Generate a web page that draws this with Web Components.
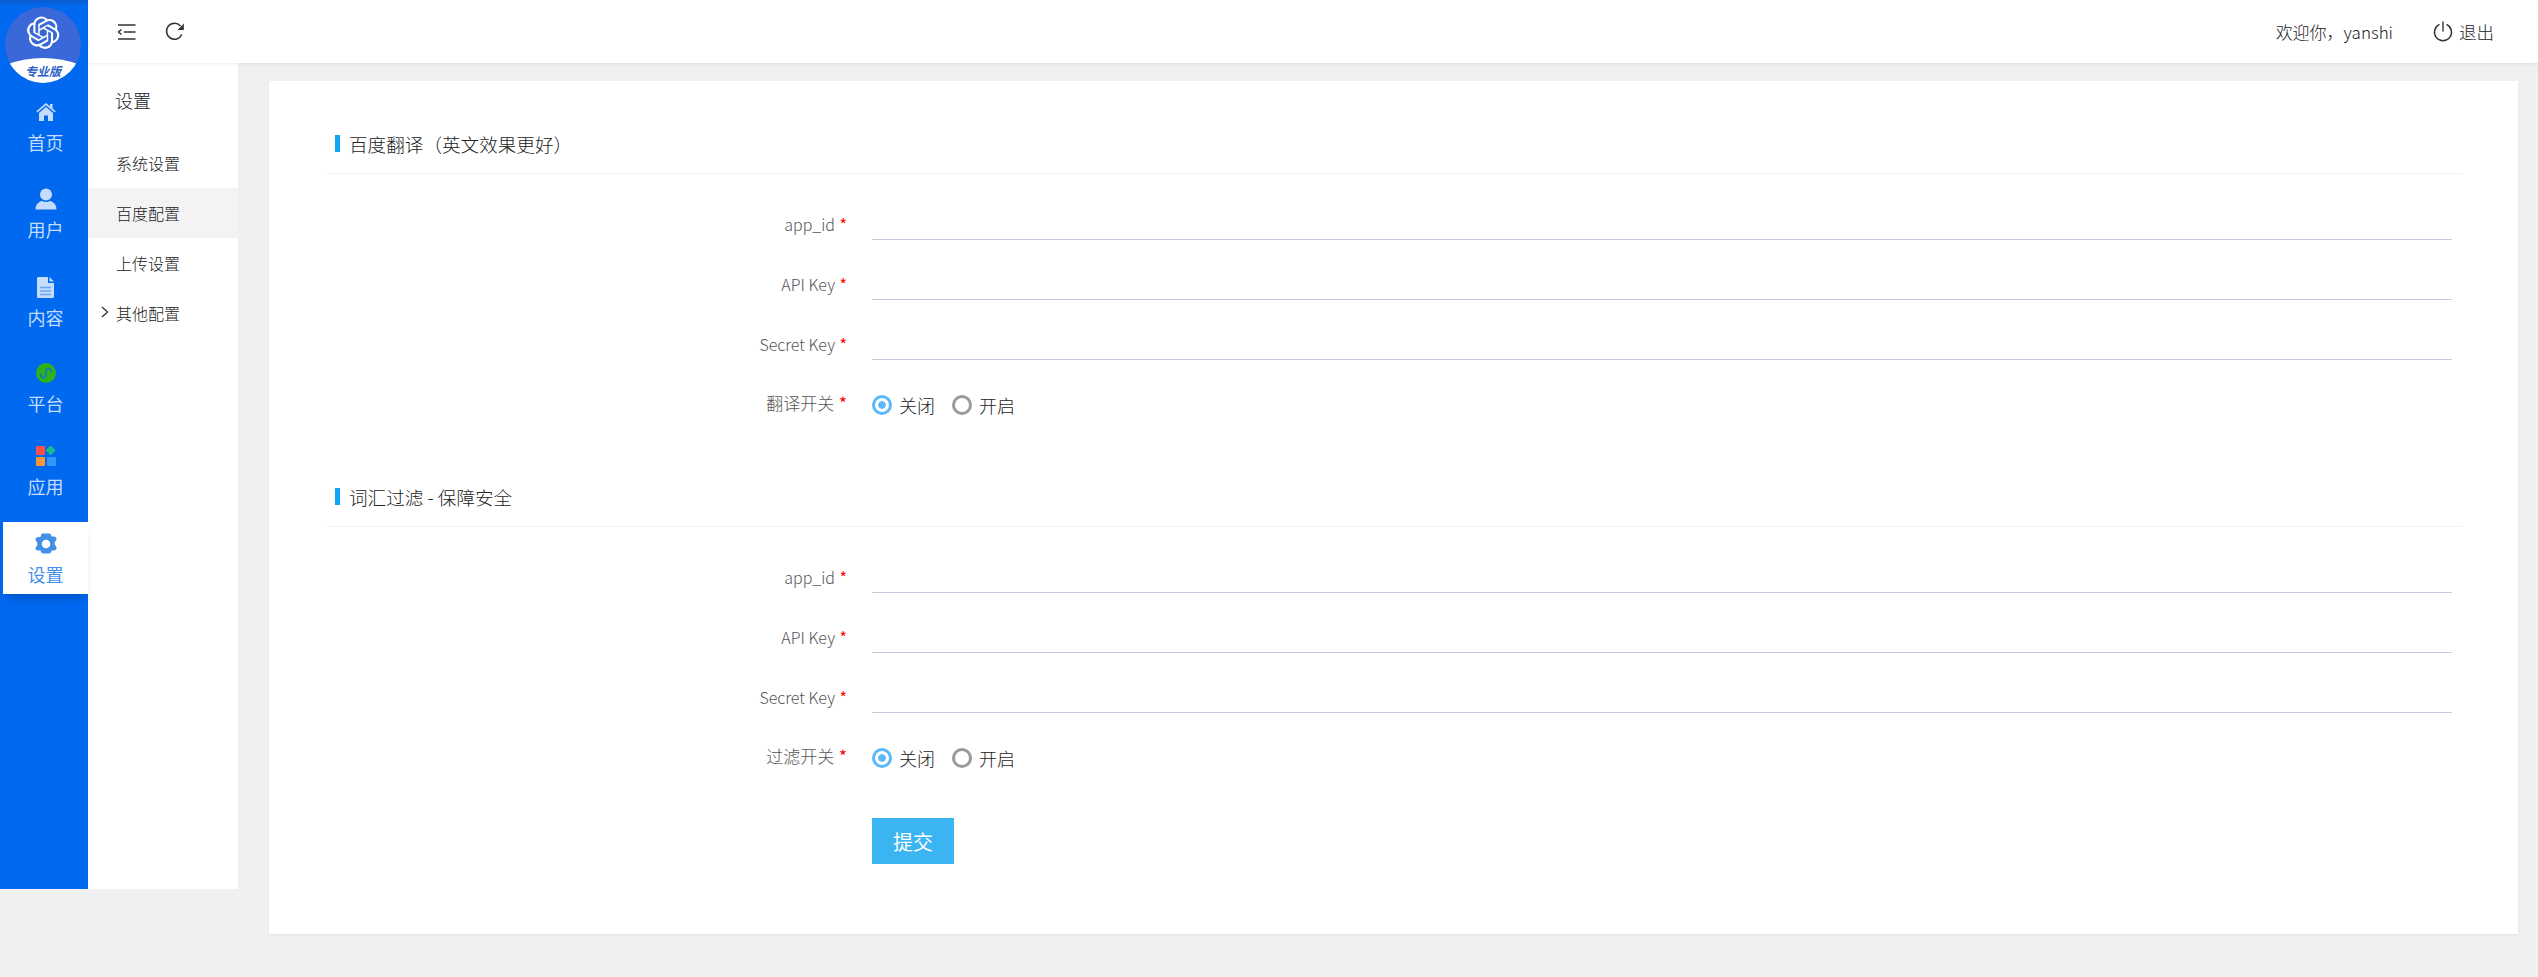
<!DOCTYPE html>
<html lang="zh-CN">
  <head>
    <meta charset="utf-8" />
    <title>百度配置</title>
    <style>
      html, body { margin: 0; height: 100%; }
      body { background: #f0f0f0; font-family: "Noto Sans CJK SC", sans-serif; font-weight: 300; color: #222; }
    </style>
  </head>
  <body>
    <app-shell>
      <side-nav slot="side">
        <nav-item label="首页" style="margin-bottom:15px">
          <svg width="20" height="18" viewBox="0 0 20 18"><path fill="#c5dcfc" d="M10 0 0.300 8.300l1 1.200L10 2.200l8.700 7.300 1-1.200-3.200-2.700V1h-2.600v2.500zM3 10V18h5v-5.500h4V18h5V10L10 4z"/></svg>
        </nav-item>
        <nav-item label="用户" style="margin-bottom:16px">
          <svg width="22" height="22" viewBox="0 0 22 22"><circle cx="11" cy="6.500" r="6" fill="#c5dcfc"/><path fill="#c5dcfc" d="M0.500 21.500c0-5 3-8 6.500-8.600 2.400 1.500 5.600 1.500 8 0 3.500.6 6.500 3.600 6.500 8.600z"/></svg>
        </nav-item>
        <nav-item label="内容" style="margin-bottom:14px">
          <svg width="17" height="21" viewBox="0 0 17 21"><path fill="#c5dcfc" d="M1.200 0H11V6H17V19.800a1.200 1.200 0 0 1-1.200 1.200H1.200A1.200 1.200 0 0 1 0 19.800V1.200A1.200 1.200 0 0 1 1.200 0zM12.500 0 17 4.500H12.500z"/><path stroke="#6ea4f2" stroke-width="1.300" d="M3 10.500h11M3 14h11M3 17.500h11"/></svg>
        </nav-item>
        <nav-item label="平台" style="margin-bottom:11px">
          <svg width="20" height="20" viewBox="0 0 20 20"><circle cx="10" cy="10" r="10" fill="#2eb11a"/><path fill="none" stroke="#0f78c4" stroke-width="1.700" stroke-linecap="round" d="M4.900 11.200A2.600 2.600 0 1 0 9.900 12.200V7.800A2.600 2.600 0 1 1 15.100 8.800"/></svg>
        </nav-item>
        <nav-item label="应用" style="margin-bottom:16px">
          <svg width="20" height="20" viewBox="0 0 20 20">
            <rect x="0" y="0" width="9" height="9" rx="1.200" fill="#ff5148"/>
            <rect x="11" y="0.800" width="7.200" height="7.200" rx="1" fill="#18bc8c" transform="rotate(45 14.600 4.400)"/>
            <rect x="0" y="11" width="9" height="9" rx="1.200" fill="#ff9538"/>
            <rect x="11" y="11" width="9" height="9" rx="1.200" fill="#3097fb"/>
          </svg>
        </nav-item>
        <nav-item label="设置" active>
          <svg width="24" height="22" viewBox="0 0 24 22"><path fill-rule="evenodd" fill="#4290e8" d="M9 .5h6c1 0 1.700.5 2 1.400l.6 1.500 1.700.1c2.400.2 3.200 1.200 3.200 2.300 0 .8-.3 1.500-.8 2.100l-1 1.300.1 2.600 1 1.300c.5.600.8 1.300.8 2.100 0 1.100-.8 2.100-3.200 2.300l-1.700.1-.6 1.500c-.3.900-1 1.400-2 1.400H9c-1 0-1.700-.5-2-1.400l-.6-1.500-1.700-.1C2.300 17.700 1.500 16.700 1.500 15.600c0-.8.300-1.500.8-2.100l1-1.300-.1-2.600-1-1.300C1.700 7.700 1.500 7 1.500 6.300c0-1.100.8-2.100 3.200-2.300l1.700-.1.600-1.500C7.300 1 8 .5 9 .5zM12 6.700a4.300 4.300 0 1 0 0 8.600 4.300 4.300 0 0 0 0-8.600z"/></svg>
        </nav-item>
      </side-nav>
      <top-bar slot="top" user="yanshi"></top-bar>
      <sub-nav slot="sub" title="设置">
        <sub-item>系统设置</sub-item>
        <sub-item active>百度配置</sub-item>
        <sub-item>上传设置</sub-item>
        <sub-item arrow>其他配置</sub-item>
      </sub-nav>
      <form-card slot="main">
        <form-section title="百度翻译（英文效果更好）" style="margin-bottom:36px">
          <form-field label="app_id"></form-field>
          <form-field label="API Key"></form-field>
          <form-field label="Secret Key"></form-field>
          <radio-field label="翻译开关"></radio-field>
        </form-section>
        <form-section title="词汇过滤 - 保障安全" style="margin-bottom:30px">
          <form-field label="app_id"></form-field>
          <form-field label="API Key"></form-field>
          <form-field label="Secret Key"></form-field>
          <radio-field label="过滤开关"></radio-field>
        </form-section>
        <submit-button>提交</submit-button>
      </form-card>
    </app-shell>

    <script>
      function shadow(el, html) {
        el.attachShadow({mode: 'open'}).innerHTML = html;
      }

      class AppShell extends HTMLElement {
        constructor() {
          super();
          shadow(this, `
            <style>
            :host { display: flex; align-items: flex-start; width: 100%; height: 977px; overflow: hidden; }
            .right { flex: 1; min-width: 0; display: flex; flex-direction: column; }
            .body { display: flex; align-items: flex-start; }
            .main { flex: 1; min-width: 0; padding: 18px 20px 0 31px; }
            </style>
            <slot name="side"></slot>
            <div class="right">
              <slot name="top"></slot>
              <div class="body">
                <slot name="sub"></slot>
                <div class="main"><slot name="main"></slot></div>
              </div>
            </div>
          `);
        }
      }

      class SideNav extends HTMLElement {
        constructor() {
          super();
          const logo = 'M22.2819 9.8211a5.9847 5.9847 0 0 0-.5157-4.9108 6.0462 6.0462 0 0 0-6.5098-2.9A6.0651 6.0651 0 0 0 4.9807 4.1818a5.9847 5.9847 0 0 0-3.9977 2.9 6.0462 6.0462 0 0 0 .7427 7.0966 5.98 5.98 0 0 0 .511 4.9107 6.051 6.051 0 0 0 6.5146 2.9001A5.9847 5.9847 0 0 0 13.2599 24a6.0557 6.0557 0 0 0 5.7718-4.2058 5.9894 5.9894 0 0 0 3.9977-2.9001 6.0557 6.0557 0 0 0-.7475-7.0729zm-9.022 12.6081a4.4755 4.4755 0 0 1-2.8764-1.0408l.1419-.0804 4.7783-2.7582a.7948.7948 0 0 0 .3927-.6813v-6.7369l2.02 1.1686a.071.071 0 0 1 .038.052v5.5826a4.504 4.504 0 0 1-4.4945 4.4944zm-9.6607-4.1254a4.4708 4.4708 0 0 1-.5346-3.0137l.142.0852 4.783 2.7582a.7712.7712 0 0 0 .7806 0l5.8428-3.3685v2.3324a.0804.0804 0 0 1-.0332.0615L9.74 19.9502a4.4992 4.4992 0 0 1-6.1408-1.6464zM2.3408 7.8956a4.485 4.485 0 0 1 2.3655-1.9728V11.6a.7664.7664 0 0 0 .3879.6765l5.8144 3.3543-2.0201 1.1685a.0757.0757 0 0 1-.071 0l-4.8303-2.7865A4.504 4.504 0 0 1 2.3408 7.872zm16.5963 3.8558L13.1038 8.364 15.1192 7.2a.0757.0757 0 0 1 .071 0l4.8303 2.7913a4.4944 4.4944 0 0 1-.6765 8.1042v-5.6772a.79.79 0 0 0-.407-.667zm2.0107-3.0231l-.142-.0852-4.7735-2.7818a.7759.7759 0 0 0-.7854 0L9.409 9.2297V6.8974a.0662.0662 0 0 1 .0284-.0615l4.8303-2.7866a4.4992 4.4992 0 0 1 6.6802 4.66zM8.3065 12.863l-2.02-1.1638a.0804.0804 0 0 1-.038-.0567V6.0742a4.4992 4.4992 0 0 1 7.3757-3.4537l-.142.0805L8.704 5.459a.7948.7948 0 0 0-.3927.6813zm1.0976-2.3654l2.602-1.4998 2.6069 1.4998v2.9994l-2.5974 1.4997-2.6067-1.4997Z';
          shadow(this, `
            <style>
            :host { display: block; position: relative; flex: none; width: 88px; height: 889px; background: #0069f0; box-sizing: border-box; padding-top: 90px; font-weight: 400; }
            :host::before { content: ""; position: absolute; left: 0; right: 0; top: 0; height: 6px; background: linear-gradient(#0a5ccb, #0069f0); }
            .logo { position: absolute; left: 5px; top: 7px; width: 76px; height: 76px; }
            .logo svg { display: block; }
            .logo span { position: absolute; left: 0; right: 0; top: 54px; text-align: center; font: italic 700 12px/20px "Noto Sans CJK SC", sans-serif; color: #2f5fc9; }
            </style>
            <div class="logo">
              <svg width="76" height="76" viewBox="0 0 76 76">
                <defs><clipPath id="c"><circle cx="38" cy="38" r="38"/></clipPath></defs>
                <circle cx="38" cy="38" r="38" fill="#3a68d8"/>
                <path clip-path="url(#c)" fill="#fff" d="M0 58Q38 44 76 58V76H0z"/>
                <g transform="translate(22 9.500) scale(1.350)"><path fill="#fff" d="${logo}"/></g>
              </svg>
              <span>专业版</span>
            </div>
            <slot></slot>
          `);
        }
      }

      class NavItem extends HTMLElement {
        constructor() {
          super();
          shadow(this, `
            <style>
            :host { display: block; color: #c5dcfc; padding-left: 3px; }
            :host([active]) { color: #4290e8; padding-left: 0; margin-left: 3px; background: #fff; box-shadow: 0 8px 8px -4px rgba(0, 40, 120, .35); }
            .box { height: 72px; box-sizing: border-box; display: flex; flex-direction: column; align-items: center; }
            .icon { height: 44px; display: flex; align-items: center; justify-content: center; }
            .label { font-size: 18px; line-height: 20px; margin-top: -2px; }
            ::slotted(svg) { display: block; }
            </style>
            <div class="box">
              <div class="icon"><slot></slot></div>
              <div class="label">${this.getAttribute('label')}</div>
            </div>
          `);
        }
      }

      class TopBar extends HTMLElement {
        constructor() {
          super();
          shadow(this, `
            <style>
            :host { display: flex; align-items: center; height: 63px; padding: 0 44px 0 29px; background: #fff; box-shadow: 0 1px 3px rgba(0, 0, 0, .08); position: relative; z-index: 1; font-size: 17px; color: #222; }
            svg { display: block; }
            .tools { display: flex; align-items: center; gap: 29px; }
            .gap { flex: 1; }
            .user { margin-right: 40px; }
            .out { display: flex; align-items: center; gap: 6px; }
            .out span { font-size: 17.500px; }
            </style>
            <div class="tools">
              <svg width="19" height="16" viewBox="0 0 19 16" fill="none" stroke="#333" stroke-width="1.500"><path d="M1 1H18.500M1 15H18.500M7 8H18.500M4.500 5.500 1.500 8l3 2.500"/></svg>
              <svg width="20" height="20" viewBox="0 0 20 20" fill="none"><path stroke="#333" stroke-width="1.600" d="M16.800 12.500A8 8 0 1 1 15.500 4"/><path fill="#333" d="M18.800 1.500V8H12.500z"/></svg>
            </div>
            <div class="gap"></div>
            <div class="user">欢迎你，${this.getAttribute('user')}</div>
            <div class="out">
              <svg width="20" height="21" viewBox="0 0 20 21" fill="none" stroke="#333" stroke-width="1.400" stroke-linecap="round"><path d="M6 3.700A8.500 8.500 0 1 0 14 3.700M10 1V10"/></svg>
              <span>退出</span>
            </div>
          `);
        }
      }

      class SubNav extends HTMLElement {
        constructor() {
          super();
          shadow(this, `
            <style>
            :host { display: block; flex: none; width: 150px; height: 826px; background: #fff; }
            .title { height: 75px; box-sizing: border-box; padding: 24px 0 0 27px; font-size: 18px; line-height: 26px; color: #222; }
            </style>
            <div class="title">${this.getAttribute('title')}</div>
            <slot></slot>
          `);
        }
      }

      class SubItem extends HTMLElement {
        constructor() {
          super();
          shadow(this, `
            <style>
            :host { display: flex; align-items: center; position: relative; height: 50px; padding-left: 28px; font-size: 16px; color: #222; }
            :host([active]) { background: #f3f3f3; }
            svg { position: absolute; left: 13px; top: 18px; }
            </style>
            ${this.hasAttribute('arrow') ? '<svg width="8" height="12" viewBox="0 0 8 12" fill="none" stroke="#333" stroke-width="1.300"><path d="M1 1l5.500 5L1 11"/></svg>' : ''}
            <slot></slot>
          `);
        }
      }

      class FormCard extends HTMLElement {
        constructor() {
          super();
          shadow(this, `
            <style>
            :host { display: block; height: 853px; box-sizing: border-box; padding: 37px 56px 0 57px; background: #fff; box-shadow: 0 1px 2px rgba(0, 0, 0, .06); }
            </style>
            <slot></slot>
          `);
        }
      }

      class FormSection extends HTMLElement {
        constructor() {
          super();
          shadow(this, `
            <style>
            :host { display: block; }
            .head { display: flex; align-items: center; gap: 9px; height: 51px; padding: 0 0 4px 9px; border-bottom: 1px solid #f0f0f0; font-size: 18.600px; color: #222; }
            .head::before { content: ""; width: 5px; height: 17px; background: #0ea5f2; }
            .rows { padding-top: 21px; }
            </style>
            <div class="head">${this.getAttribute('title')}</div>
            <div class="rows"><slot></slot></div>
          `);
        }
      }

      const fieldStyle = `
        .label { flex: none; width: 521px; box-sizing: border-box; text-align: right; color: #555; }
        .label b { font-weight: 400; color: #f00; margin-left: 1px; }
      `;

      class FormField extends HTMLElement {
        constructor() {
          super();
          shadow(this, `
            <style>
            :host { display: flex; align-items: flex-start; height: 60px; }
            ${fieldStyle}
            .label { padding-top: 17px; font-size: 16px; line-height: 24px; }
            .input { flex: 1; margin: 0 10px 0 25px; border-bottom: 1px solid #c5cbdc; height: 45px; box-sizing: border-box; }
            </style>
            <div class="label">${this.getAttribute('label')} <b>*</b></div>
            <div class="input"></div>
          `);
        }
      }

      class RadioField extends HTMLElement {
        constructor() {
          super();
          shadow(this, `
            <style>
            :host { display: flex; align-items: center; height: 60px; }
            ${fieldStyle}
            .label { font-size: 17px; padding-bottom: 5px; }
            .opts { display: flex; align-items: center; margin-left: 25px; font-size: 18px; color: #222; }
            .r { width: 20px; height: 20px; box-sizing: border-box; border-radius: 50%; border: 3px solid #9a9a9a; margin-right: 7px; }
            .r.on { border-color: #5ab8fb; background: radial-gradient(circle, #5ab8fb 0 3.500px, #fff 4px); }
            .t { margin-right: 17px; }
            </style>
            <div class="label">${this.getAttribute('label')} <b>*</b></div>
            <div class="opts">
              <div class="r on"></div><div class="t">关闭</div>
              <div class="r"></div><div class="t">开启</div>
            </div>
          `);
        }
      }

      class SubmitButton extends HTMLElement {
        constructor() {
          super();
          shadow(this, `
            <style>
            :host { display: flex; width: 82px; height: 46px; margin-left: 546px; align-items: center; justify-content: center; background: #3bb4f2; color: #fff; font-size: 20px; font-weight: 400; }
            </style>
            <slot></slot>
          `);
        }
      }

      window.customElements.define('app-shell', AppShell);
      window.customElements.define('side-nav', SideNav);
      window.customElements.define('nav-item', NavItem);
      window.customElements.define('top-bar', TopBar);
      window.customElements.define('sub-nav', SubNav);
      window.customElements.define('sub-item', SubItem);
      window.customElements.define('form-card', FormCard);
      window.customElements.define('form-section', FormSection);
      window.customElements.define('form-field', FormField);
      window.customElements.define('radio-field', RadioField);
      window.customElements.define('submit-button', SubmitButton);
    </script>
  </body>
</html>
